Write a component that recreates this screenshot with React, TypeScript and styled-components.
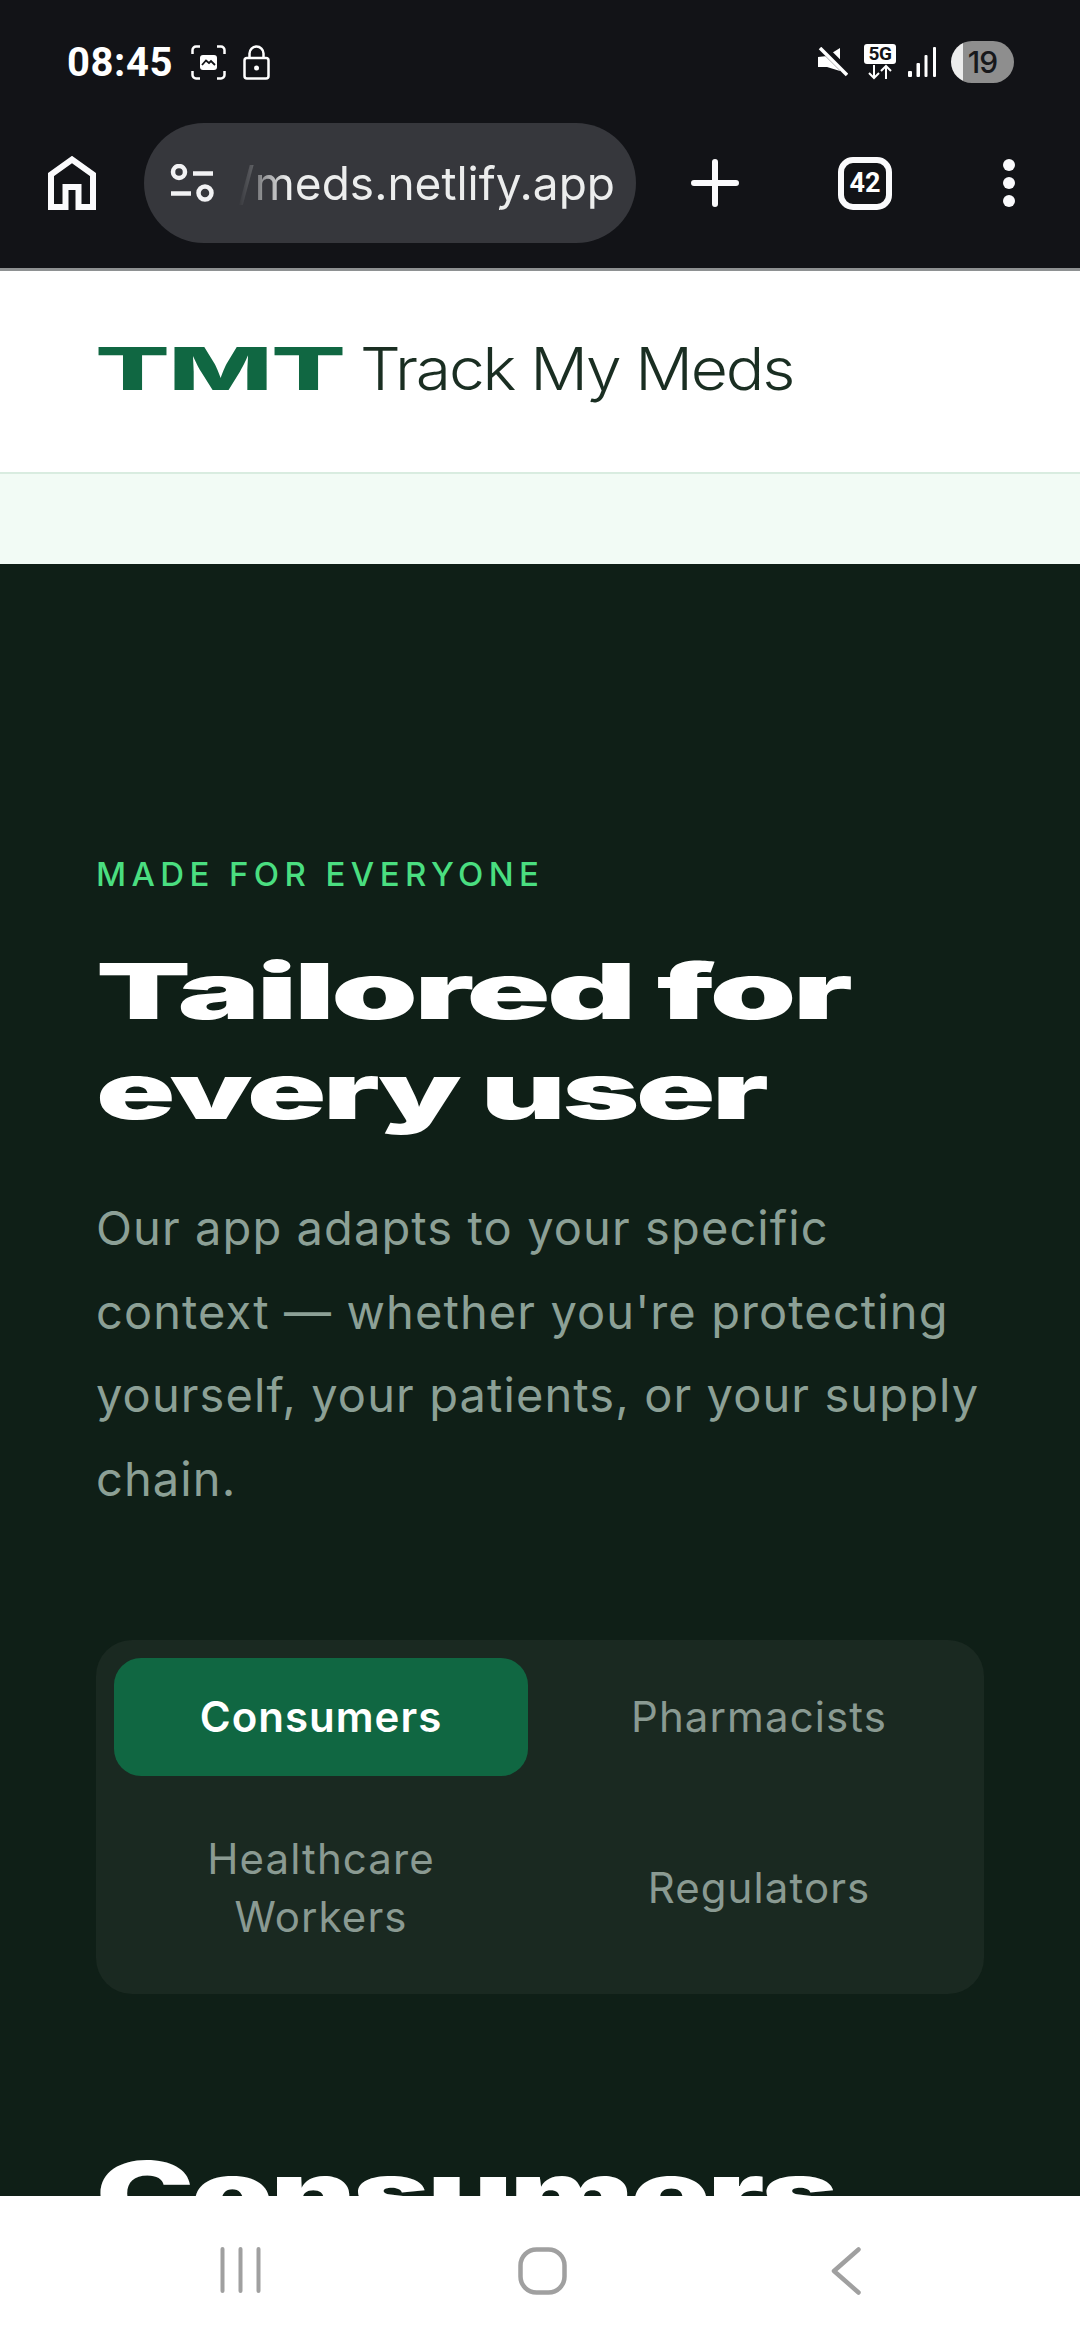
import React from "react";
import styled, { createGlobalStyle } from "styled-components";

const Global = createGlobalStyle`
  html, body { margin: 0; padding: 0; background: #fff; }
  * { box-sizing: border-box; }
`;

const Screen = styled.div`
  width: 1080px;
  height: 2340px;
  display: flex;
  flex-direction: column;
  overflow: hidden;
  font-family: Inter, "Liberation Sans", sans-serif;
`;

const Chrome = styled.header`
  flex: none;
  height: 271px;
  background: #121317;
  border-bottom: 3px solid #8e9192;
  color: #fff;
`;

const StatusBar = styled.div`
  height: 123px;
  padding: 41px 66px 0 67px;
  display: flex;
  justify-content: space-between;
  align-items: flex-start;
`;

const StatusGroup = styled.div`
  display: flex;
  align-items: center;
  height: 42px;
`;

const Clock = styled.span`
  font-family: Roboto, sans-serif;
  font-size: 40px;
  font-weight: 700;
  letter-spacing: 0.6px;
  margin-right: 18px;
`;

const Battery = styled.div`
  width: 63px;
  height: 42px;
  border-radius: 21px;
  background: linear-gradient(to right, #ececec 12px, #8e8e8e 12px);
  color: #17181b;
  font-family: Inter, sans-serif;
  font-size: 30px;
  font-weight: 500;
  display: flex;
  align-items: center;
  justify-content: center;
  letter-spacing: -1px;
  margin-left: 14px;
`;

const Toolbar = styled.div`
  height: 120px;
  padding: 0 48px;
  display: flex;
  align-items: center;
`;

const UrlPill = styled.div`
  width: 492px;
  height: 120px;
  margin-left: 48px;
  margin-right: 55px;
  padding-left: 26px;
  border-radius: 60px;
  background: #36373c;
  display: flex;
  align-items: center;
  flex: none;
`;

const UrlText = styled.div`
  margin-left: 24px;
  font-size: 46px;
  font-family: Inter, sans-serif;
  color: #eceded;
  white-space: nowrap;
  mask-image: linear-gradient(to right, transparent 0, rgba(0,0,0,.2) 14px, rgba(0,0,0,.5) 24px, #000 50px);
  -webkit-mask-image: linear-gradient(to right, transparent 0, rgba(0,0,0,.2) 14px, rgba(0,0,0,.5) 24px, #000 50px);
`;

const TabCount = styled.div`
  width: 54px;
  height: 53px;
  margin-left: 99px;
  border: 6px solid #fafafc;
  border-radius: 15px;
  display: flex;
  align-items: center;
  justify-content: center;
  font-family: Roboto, sans-serif;
  font-weight: 700;
  font-size: 27px;
`;

const MenuDots = styled.div`
  margin-left: 111px;
  display: flex;
  flex-direction: column;
  gap: 6px;
`;

const MenuDot = styled.span`
  width: 12px;
  height: 12px;
  border-radius: 50%;
  background: #fafafc;
`;

const SiteHeader = styled.div`
  flex: none;
  height: 203px;
  background: #fff;
  border-bottom: 2px solid #d9ece0;
  padding: 0 95px 6px;
  display: flex;
  align-items: center;
`;

const LogoMark = styled.div`
  width: 246px;
  margin-right: 19px;
  flex: none;
`;

const LogoMarkText = styled.span`
  display: inline-block;
  font-size: 59px;
  font-weight: 800;
  line-height: 70px;
  letter-spacing: -1px;
  color: #106742;
  transform: scaleX(1.88);
  transform-origin: left center;
  white-space: nowrap;
`;

const LogoName = styled.span`
  display: inline-block;
  font-size: 59px;
  font-weight: 300;
  line-height: 70px;
  letter-spacing: -2px;
  color: #1a2e22;
  white-space: nowrap;
  transform: scaleX(1.087);
  transform-origin: left center;
`;

const Strip = styled.div`
  flex: none;
  height: 90px;
  background: #f2fbf5;
`;

const Section = styled.section`
  flex: 1;
  min-height: 0;
  overflow: hidden;
  background: #0f1f17;
  padding: 290px 96px 0;
`;

const Eyebrow = styled.div`
  font-size: 33px;
  line-height: 40px;
  font-weight: 500;
  letter-spacing: 5.4px;
  color: #4ade80;
`;

const Heading = styled.h2`
  margin: 47px 0 0;
  font-size: 77px;
  line-height: 100px;
  font-weight: 900;
  letter-spacing: -2px;
  color: #fff;
`;

const WideLine = styled.span<{ $stretch: number }>`
  display: block;
  white-space: nowrap;
  transform: scaleX(${(p) => p.$stretch});
  transform-origin: left center;
`;

const Lead = styled.p`
  margin: 45px -12px 0 0;
  font-size: 47px;
  line-height: 83.5px;
  font-weight: 400;
  letter-spacing: 1.1px;
  color: #8ca096;
`;

const TabGrid = styled.div`
  margin-top: 120px;
  padding: 18px;
  border-radius: 36px;
  background: #1a2921;
  display: grid;
  grid-template-columns: 1fr 1fr;
  gap: 24px;
`;

const Tab = styled.div<{ $active?: boolean }>`
  padding: 30px 40px;
  border-radius: 27px;
  display: flex;
  align-items: center;
  justify-content: center;
  text-align: center;
  font-size: 42px;
  line-height: 58px;
  letter-spacing: ${(p) => (p.$active ? 1 : 1.1)}px;
  font-weight: ${(p) => (p.$active ? 600 : 400)};
  color: ${(p) => (p.$active ? "#fff" : "#8a9a92")};
  background: ${(p) => (p.$active ? "#106742" : "transparent")};
`;

const NextHeading = styled.h3`
  margin: 150px 0 0;
  font-size: 90px;
  line-height: 100px;
  font-weight: 900;
  letter-spacing: -2px;
  color: #fff;
`;

const NavBar = styled.nav`
  flex: none;
  height: 144px;
  background: #fff;
  padding: 51px 220px 0;
  display: flex;
  align-items: flex-start;
`;

const NavSlot = styled.div<{ $offset?: number }>`
  margin-left: ${(p) => p.$offset ?? 0}px;
  display: flex;
`;

const HomeIcon = () => (
  <svg width="48" height="54" viewBox="0 0 48 54" fill="none">
    <path d="M3 51V18.5L24 3.5L45 18.5V51H30.5V31H17.5V51Z" stroke="#fafafc" strokeWidth="6" />
  </svg>
);

const TuneIcon = () => (
  <svg width="44" height="38" viewBox="0 0 44 38" fill="none" stroke="#f2f2f4">
    <circle cx="9" cy="8" r="6" strokeWidth="4.5" />
    <circle cx="35" cy="29" r="6.5" strokeWidth="4.5" />
    <path d="M23 9.5H43M1 29.5H21" strokeWidth="4.5" />
  </svg>
);

const ScreenshotIcon = () => (
  <svg width="35" height="35" viewBox="0 0 35 35" fill="none" style={{ marginRight: 17 }}>
    <path d="M9 1.5H5A3.5 3.5 0 0 0 1.5 5V9M26 1.5H30A3.5 3.5 0 0 1 33.500 5V9M9 33.500H5A3.500 3.500 0 0 1 1.500 30V26M26 33.500H30A3.500 3.500 0 0 0 33.500 30V26" stroke="#fff" strokeWidth="2.500" />
    <rect x="9" y="10" width="17" height="15" rx="3" fill="#fff" />
    <path d="M11 20L15 15.500L18 18L20 16L24 20" stroke="#121317" strokeWidth="1.800" />
  </svg>
);

const LockIcon = () => (
  <svg width="27" height="35" viewBox="0 0 27 35" fill="none" stroke="#fff" strokeWidth="2.500">
    <rect x="1.500" y="13" width="24" height="20.500" rx="2.500" />
    <path d="M6.500 13V8.500A7 7 0 0 1 20.500 8.500V13" />
    <circle cx="13.500" cy="23" r="2.500" fill="#fff" stroke="none" />
  </svg>
);

const MuteIcon = () => (
  <svg width="30" height="30" viewBox="0 0 30 30" style={{ marginRight: 16 }}>
    <path d="M0 10L9 9L22 1V24L9 20H0Z" fill="#fff" />
    <path d="M2 -2L32 28" stroke="#121317" strokeWidth="8" />
    <path d="M2 1L29 28" stroke="#fff" strokeWidth="3.500" />
  </svg>
);

const FiveGBadge = styled.div`
  width: 32px;
  height: 36px;
  margin-right: 12px;
`;

const FiveGLabel = styled.span`
  display: block;
  width: 32px;
  height: 20px;
  background: #fff;
  border-radius: 3px;
  color: #121317;
  font-family: Roboto, sans-serif;
  font-size: 19px;
  font-weight: 700;
  line-height: 20px;
  text-align: center;
  letter-spacing: -0.5px;
`;

const FiveGArrows = () => (
  <svg width="32" height="16" viewBox="0 0 32 16" fill="none" stroke="#fff" strokeWidth="2" style={{ display: "block" }}>
    <path d="M10 1V14M5 9L10 14L15 9M22 15V2M17 7L22 2L27 7" />
  </svg>
);

const SignalIcon = () => (
  <svg width="29" height="30" viewBox="0 0 29 30" fill="#fff">
    <rect x="0" y="24" width="4" height="6" rx="1" />
    <rect x="8.500" y="16" width="3.500" height="14" rx="1" />
    <rect x="16.500" y="8" width="3" height="22" rx="1" />
    <rect x="25" y="0" width="3" height="30" rx="1" />
  </svg>
);

const PlusIcon = () => (
  <svg width="48" height="48" viewBox="0 0 48 48" stroke="#fafafc" strokeWidth="6" strokeLinecap="round">
    <path d="M24 3V45M3 24H45" />
  </svg>
);

const RecentsIcon = () => (
  <svg width="41" height="46" viewBox="0 0 41 46" fill="none" stroke="#a0a0a0" strokeWidth="4" strokeLinecap="round">
    <path d="M2.500 2V44M20.500 2V44M38.500 2V44" />
  </svg>
);

const HomeNavIcon = () => (
  <svg width="49" height="48" viewBox="0 0 49 48" fill="none" stroke="#a0a0a0" strokeWidth="4.500">
    <rect x="2.500" y="2.500" width="44" height="43" rx="16" />
  </svg>
);

const BackIcon = () => (
  <svg width="30" height="48" viewBox="0 0 30 48" fill="none" stroke="#a0a0a0" strokeWidth="4.500" strokeLinecap="round" strokeLinejoin="round">
    <path d="M27.500 2.500L3 24L27.500 45.500" />
  </svg>
);

export default function App() {
  return (
    <Screen>
      <Global />
      <Chrome>
        <StatusBar>
          <StatusGroup>
            <Clock>08:45</Clock>
            <ScreenshotIcon />
            <LockIcon />
          </StatusGroup>
          <StatusGroup>
            <MuteIcon />
            <FiveGBadge>
              <FiveGLabel>5G</FiveGLabel>
              <FiveGArrows />
            </FiveGBadge>
            <SignalIcon />
            <Battery>19</Battery>
          </StatusGroup>
        </StatusBar>
        <Toolbar>
          <HomeIcon />
          <UrlPill>
            <TuneIcon />
            <UrlText>/meds.netlify.app</UrlText>
          </UrlPill>
          <PlusIcon />
          <TabCount>42</TabCount>
          <MenuDots>
            <MenuDot />
            <MenuDot />
            <MenuDot />
          </MenuDots>
        </Toolbar>
      </Chrome>
      <SiteHeader>
        <LogoMark>
          <LogoMarkText>TMT</LogoMarkText>
        </LogoMark>
        <LogoName>Track My Meds</LogoName>
      </SiteHeader>
      <Strip />
      <Section>
        <Eyebrow>MADE FOR EVERYONE</Eyebrow>
        <Heading>
          <WideLine $stretch={1.8}>Tailored for</WideLine>
          <WideLine $stretch={1.7}>every user</WideLine>
        </Heading>
        <Lead>Our app adapts to your specific context — whether you're protecting yourself, your patients, or your supply chain.</Lead>
        <TabGrid>
          <Tab $active>Consumers</Tab>
          <Tab>Pharmacists</Tab>
          <Tab>Healthcare Workers</Tab>
          <Tab>Regulators</Tab>
        </TabGrid>
        <NextHeading>
          <WideLine $stretch={1.46}>Consumers</WideLine>
        </NextHeading>
      </Section>
      <NavBar>
        <NavSlot><RecentsIcon /></NavSlot>
        <NavSlot $offset={257}><HomeNavIcon /></NavSlot>
        <NavSlot $offset={264}><BackIcon /></NavSlot>
      </NavBar>
    </Screen>
  );
}
